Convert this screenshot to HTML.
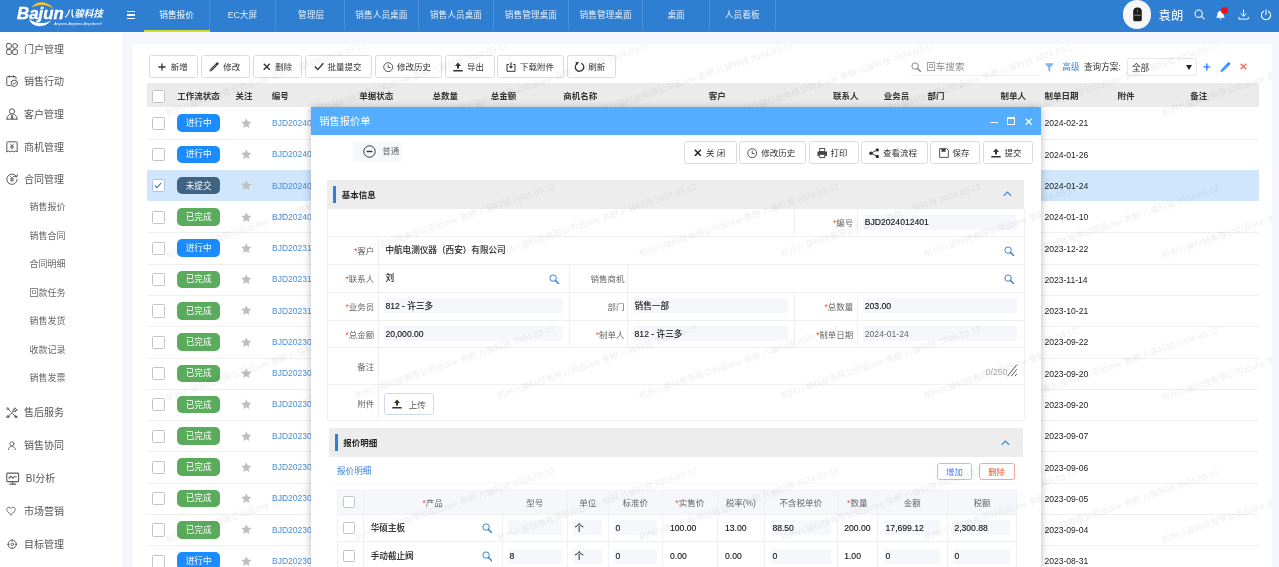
<!DOCTYPE html>
<html lang="zh-CN"><head><meta charset="utf-8"><title>销售报价</title>
<style>
html,body{margin:0;padding:0}
body{width:1279px;height:567px;overflow:hidden;position:relative;background:#f5f7fc;font-family:"Liberation Sans","Noto Sans CJK SC",sans-serif;font-size:8.5px;color:#333}
#w{position:absolute;left:0;top:0;width:1279px;height:567px;overflow:hidden;will-change:transform}
.b{position:absolute;box-sizing:border-box;display:block}
.t{position:absolute;white-space:nowrap}
.btn{position:absolute;box-sizing:border-box;border:1px solid #dcdcdc;border-radius:2.5px;background:#fff}
.ck{position:absolute;box-sizing:border-box;border:1px solid #c4c4c4;border-radius:1.5px;background:#fff}
.bd{position:absolute;box-sizing:border-box;padding-top:0.8px;border-radius:5px;color:#fff;text-align:center;font-size:8.6px;line-height:17.6px;width:42.4px;height:17.6px;white-space:nowrap}
.r{color:#f4512c}
.wm{position:absolute;white-space:nowrap;font-size:8.55px;line-height:12px;color:rgba(0,0,0,0.075);transform-origin:100% 50%;transform:rotate(-18.8deg);pointer-events:none}
</style></head><body>
<div id="w">
<div class="b" style="left:0.00px;top:0.00px;width:1279.00px;height:31.60px;background:#2e7ed2"></div>
<div class="b" style="left:0.00px;top:31.60px;width:122.00px;height:535.40px;background:#fff"></div>
<div class="b" style="left:133.00px;top:44.00px;width:1139.00px;height:523.00px;background:#fff"></div>
<svg class="b" style="left:28.00px;top:0.00px;" width="28" height="28" viewBox="0 0 28 28"><path d="M3.8 7.6 C7.4 0.6 19.6 -0.6 26.2 9.6 C20.4 4.2 11 3.6 3.8 7.6 Z" fill="#f6c22a"/><path d="M1 19 C4.4 28.4 17.4 28.2 23.4 20.2 C16.6 24.4 7.4 24 1 19 Z" fill="#fff"/></svg>
<div class="t" style="top:5.30px;font-size:16px;color:#fff;line-height:18px;left:17.00px;font-weight:bold;-webkit-text-stroke:0.35px #fff;font-style:italic;transform-origin:0 50%;transform:scaleX(1.05);">Bajun</div>
<div class="t" style="top:8.17px;font-size:9.6px;color:#fff;line-height:12px;left:64.60px;font-weight:bold;font-style:italic;">八骏科技</div>
<div class="t" style="top:20.60px;font-size:3.92px;color:#fff;line-height:6px;left:54.00px;font-style:italic;">Anyone,Anytime,Anywhere!</div>
<div class="b" style="left:127.00px;top:11.05px;width:8.40px;height:1.10px;background:#fff"></div>
<div class="b" style="left:127.00px;top:14.45px;width:8.40px;height:1.10px;background:#fff"></div>
<div class="b" style="left:127.00px;top:17.85px;width:8.40px;height:1.10px;background:#fff"></div>
<div class="t" style="top:9.30px;font-size:8.7px;color:#fff;line-height:12px;left:76.62px;width:200px;text-align:center;">销售报价</div>
<div class="b" style="left:209.10px;top:0.00px;width:0.80px;height:30.40px;background:rgba(255,255,255,0.13)"></div>
<div class="t" style="top:9.30px;font-size:8.7px;color:#e6f0fb;line-height:12px;left:142.50px;width:200px;text-align:center;">EC大屏</div>
<div class="b" style="left:275.10px;top:0.00px;width:0.80px;height:30.40px;background:rgba(255,255,255,0.13)"></div>
<div class="t" style="top:9.30px;font-size:8.7px;color:#e6f0fb;line-height:12px;left:211.07px;width:200px;text-align:center;">管理层</div>
<div class="b" style="left:343.85px;top:0.00px;width:0.80px;height:30.40px;background:rgba(255,255,255,0.13)"></div>
<div class="t" style="top:9.30px;font-size:8.7px;color:#e6f0fb;line-height:12px;left:281.38px;width:200px;text-align:center;">销售人员桌面</div>
<div class="b" style="left:418.10px;top:0.00px;width:0.80px;height:30.40px;background:rgba(255,255,255,0.13)"></div>
<div class="t" style="top:9.30px;font-size:8.7px;color:#e6f0fb;line-height:12px;left:355.95px;width:200px;text-align:center;">销售人员桌面</div>
<div class="b" style="left:493.00px;top:0.00px;width:0.80px;height:30.40px;background:rgba(255,255,255,0.13)"></div>
<div class="t" style="top:9.30px;font-size:8.7px;color:#e6f0fb;line-height:12px;left:430.90px;width:200px;text-align:center;">销售管理桌面</div>
<div class="b" style="left:568.00px;top:0.00px;width:0.80px;height:30.40px;background:rgba(255,255,255,0.13)"></div>
<div class="t" style="top:9.30px;font-size:8.7px;color:#e6f0fb;line-height:12px;left:505.60px;width:200px;text-align:center;">销售管理桌面</div>
<div class="b" style="left:642.40px;top:0.00px;width:0.80px;height:30.40px;background:rgba(255,255,255,0.13)"></div>
<div class="t" style="top:9.30px;font-size:8.7px;color:#e6f0fb;line-height:12px;left:576.10px;width:200px;text-align:center;">桌面</div>
<div class="b" style="left:709.00px;top:0.00px;width:0.80px;height:30.40px;background:rgba(255,255,255,0.13)"></div>
<div class="t" style="top:9.30px;font-size:8.7px;color:#e6f0fb;line-height:12px;left:642.20px;width:200px;text-align:center;">人员看板</div>
<div class="b" style="left:774.60px;top:0.00px;width:0.80px;height:30.40px;background:rgba(255,255,255,0.13)"></div>
<div class="b" style="left:143.75px;top:29.90px;width:65.75px;height:1.70px;background:#d4dc2a"></div>
<div class="b" style="left:1122.80px;top:0.30px;width:28.40px;height:28.40px;background:#f7f7f7;border-radius:50%"></div>
<svg class="b" style="left:1132.00px;top:7.00px;" width="11" height="15" viewBox="0 0 11 15"><path d="M1.2 5.2 C1.2 1.6 3 0.6 5.5 0.6 C8 0.6 9.8 1.6 9.8 5.2 L9.8 12.6 C9.8 13.6 9.2 14.2 8.2 14.2 L2.8 14.2 C1.8 14.2 1.2 13.6 1.2 12.6 Z" fill="#1d1d1f"/><rect x="2.2" y="7.6" width="6.6" height="1.3" fill="#777"/><rect x="4.9" y="2" width="1.2" height="4" rx="0.6" fill="#555"/></svg>
<div class="t" style="top:8.28px;font-size:12.3px;color:#fff;line-height:16px;left:1158.60px;">袁朗</div>
<svg class="b" style="left:1193.50px;top:9.30px;" width="11.4" height="10.45" viewBox="0 0 12 11"><circle cx="4.9" cy="4.9" r="3.9" fill="none" stroke="#fff" stroke-width="1.1"/><path d="M7.8 7.8 L10.8 10.4" stroke="#fff" stroke-width="1.2" stroke-linecap="round"/></svg>
<svg class="b" style="left:1215.00px;top:9.50px;" width="12" height="11" viewBox="0 0 12 11"><path d="M5.5 1 C3.3 1 2.4 2.8 2.4 4.6 C2.4 6.4 1.8 7 0.9 7.8 L10.1 7.8 C9.2 7 8.6 6.4 8.6 4.6 C8.6 2.8 7.7 1 5.5 1 Z" fill="#fff"/><path d="M4.3 8.5 a1.25 1.25 0 0 0 2.4 0 Z" fill="#fff"/></svg>
<div class="b" style="left:1220.80px;top:6.80px;width:7.10px;height:7.10px;background:#f40d14;border-radius:50%"></div>
<svg class="b" style="left:1237.60px;top:8.70px;" width="11.2" height="11.6" viewBox="0 0 12 12"><path d="M6 0.8 V7.4 M3.1 4.8 L6 7.6 L8.9 4.8 M1 8.6 V10.6 H11 V8.6" fill="none" stroke="#fff" stroke-width="1.05" stroke-linecap="round" stroke-linejoin="round"/></svg>
<svg class="b" style="left:1260.40px;top:8.80px;" width="12" height="12" viewBox="0 0 12 12"><path d="M3.6 2.3 A4.6 4.6 0 1 0 8.4 2.3" fill="none" stroke="#fff" stroke-width="1.05" stroke-linecap="round"/><path d="M6 0.8 V5.6" stroke="#fff" stroke-width="1.05" stroke-linecap="round"/></svg>
<svg class="b" style="left:6.30px;top:43.00px;" width="12" height="12" viewBox="0 0 12 12"><g fill="none" stroke="#5a5a5a" stroke-width="1" stroke-linecap="round" stroke-linejoin="round"><rect x="0.6" y="0.6" width="4.7" height="4.7" rx="0.9"/><rect x="0.6" y="6.7" width="4.7" height="4.7" rx="0.9"/><rect x="6.7" y="6.7" width="4.7" height="4.7" rx="0.9"/><circle cx="9.05" cy="2.95" r="2.4"/></g></svg>
<div class="t" style="top:42.80px;font-size:10px;color:#555;line-height:14px;left:24.00px;">门户管理</div>
<svg class="b" style="left:6.30px;top:75.20px;" width="12" height="12" viewBox="0 0 12 12"><g fill="none" stroke="#5a5a5a" stroke-width="1" stroke-linecap="round" stroke-linejoin="round"><path d="M4.4 10.6 H1.8 Q0.8 10.6 0.8 9.6 V2.6 Q0.8 1.6 1.8 1.6 H9 Q10 1.6 10 2.6 V4"/><path d="M3.2 0.7 V2.4 M7.6 0.7 V2.4" /><circle cx="8.3" cy="8.3" r="3.2"/><path d="M6.9 8.3 L8 9.4 L9.8 7.4"/></g></svg>
<div class="t" style="top:75.00px;font-size:10px;color:#555;line-height:14px;left:24.00px;">销售行动</div>
<svg class="b" style="left:6.30px;top:108.00px;" width="12" height="12" viewBox="0 0 12 12"><g fill="none" stroke="#5a5a5a" stroke-width="1" stroke-linecap="round" stroke-linejoin="round"><circle cx="6" cy="3.4" r="2.6"/><path d="M0.9 11.2 C0.9 8 3.2 6.4 4.4 6.2 M11.1 11.2 C11.1 8 8.8 6.4 7.6 6.2 M0.9 11.2 H11.1 M6 7.2 L5.2 10.8 H6.8 Z"/></g></svg>
<div class="t" style="top:107.80px;font-size:10px;color:#555;line-height:14px;left:24.00px;">客户管理</div>
<svg class="b" style="left:6.30px;top:140.80px;" width="12" height="12" viewBox="0 0 12 12"><g fill="none" stroke="#5a5a5a" stroke-width="1" stroke-linecap="round" stroke-linejoin="round"><path d="M0.8 10.8 V1.8 Q0.8 0.8 1.8 0.8 H10.2 Q11.2 0.8 11.2 1.8 V10.8 L9.5 10 L7.8 10.8 L6 10 L4.2 10.8 L2.5 10 Z"/><path d="M4.4 3 L6 5 L7.6 3 M6 5 V8 M4.6 5.4 H7.4 M4.6 6.8 H7.4" stroke-width="0.8"/></g></svg>
<div class="t" style="top:140.60px;font-size:10px;color:#555;line-height:14px;left:24.00px;">商机管理</div>
<svg class="b" style="left:6.30px;top:173.40px;" width="12" height="12" viewBox="0 0 12 12"><g fill="none" stroke="#5a5a5a" stroke-width="1" stroke-linecap="round" stroke-linejoin="round"><path d="M10.6 3.8 A5.2 5.2 0 1 0 11.2 6.4"/><path d="M11.3 1.6 L10.8 4 L8.5 3.4" /><path d="M4.4 3.4 L6 5.4 L7.6 3.4 M6 5.4 V8.8 M4.5 5.9 H7.5 M4.5 7.3 H7.5" stroke-width="0.8"/></g></svg>
<div class="t" style="top:173.20px;font-size:10px;color:#555;line-height:14px;left:24.00px;">合同管理</div>
<svg class="b" style="left:6.20px;top:406.70px;" width="11.6" height="11.6" viewBox="0 0 12 12"><g fill="none" stroke="#5a5a5a" stroke-width="1" stroke-linecap="round" stroke-linejoin="round"><path d="M1 11 L7.4 4.6 M7.4 4.6 C6.6 2.8 8 0.8 10.2 1.2 L8.8 2.6 L9.4 3.6 L10.6 3.4 L11.2 2.2 C11.6 4.2 9.6 5.6 7.4 4.6"/><path d="M11 11 L6.8 6.8 M4.6 4.6 L2.6 2.6 L1.4 2.6 L0.8 1.2 L1.6 0.8 L2.8 1.4 L2.8 2.6"/><circle cx="1.9" cy="10.1" r="1.1"/><circle cx="10.1" cy="10.1" r="1.1"/></g></svg>
<div class="t" style="top:406.30px;font-size:10px;color:#555;line-height:14px;left:24.00px;">售后服务</div>
<svg class="b" style="left:6.90px;top:440.60px;" width="9.8" height="9.8" viewBox="0 0 12 12"><g fill="none" stroke="#5a5a5a" stroke-width="1" stroke-linecap="round" stroke-linejoin="round"><circle cx="6" cy="3.4" r="2.5"/><path d="M1.6 11 C1.6 8 3.4 6.8 6 6.8 C8.6 6.8 10.4 8 10.4 11 Z"/></g></svg>
<div class="t" style="top:439.30px;font-size:10px;color:#555;line-height:14px;left:24.00px;">销售协同</div>
<svg class="b" style="left:6.20px;top:471.70px;" width="13.4" height="13.4" viewBox="0 0 12 12"><g fill="none" stroke="#5a5a5a" stroke-width="1" stroke-linecap="round" stroke-linejoin="round"><rect x="0.7" y="1" width="10.6" height="7.6" rx="0.8"/><path d="M6 8.6 V10.8 M3.4 10.9 H8.6 M2.6 5.6 L4.4 3.8 L6 5.6 L7.4 4.2 L9.2 4.2"/></g></svg>
<div class="t" style="top:472.20px;font-size:10px;color:#555;line-height:14px;left:25.80px;">BI分析</div>
<svg class="b" style="left:6.40px;top:506.00px;" width="10" height="10" viewBox="0 0 12 12"><g fill="none" stroke="#5a5a5a" stroke-width="1" stroke-linecap="round" stroke-linejoin="round"><path d="M6 10.4 C2.6 7.8 0.9 6 0.9 4 C0.9 2.4 2.1 1.4 3.4 1.4 C4.6 1.4 5.5 2.1 6 3 C6.5 2.1 7.4 1.4 8.6 1.4 C9.9 1.4 11.1 2.4 11.1 4 C11.1 6 9.4 7.8 6 10.4 Z"/></g></svg>
<div class="t" style="top:504.80px;font-size:10px;color:#555;line-height:14px;left:24.00px;">市场营销</div>
<svg class="b" style="left:6.50px;top:538.70px;" width="10.6" height="10.6" viewBox="0 0 12 12"><g fill="none" stroke="#5a5a5a" stroke-width="1" stroke-linecap="round" stroke-linejoin="round"><circle cx="6" cy="6" r="4.6"/><circle cx="6" cy="6" r="1.5"/><path d="M6 0.4 V2.4 M6 9.6 V11.6 M0.4 6 H2.4 M9.6 6 H11.6"/></g></svg>
<div class="t" style="top:537.80px;font-size:10px;color:#555;line-height:14px;left:24.00px;">目标管理</div>
<div class="t" style="top:201.42px;font-size:9px;color:#666;line-height:12px;left:29.60px;">销售报价</div>
<div class="t" style="top:229.92px;font-size:9px;color:#666;line-height:12px;left:29.60px;">销售合同</div>
<div class="t" style="top:258.32px;font-size:9px;color:#666;line-height:12px;left:29.60px;">合同明细</div>
<div class="t" style="top:286.72px;font-size:9px;color:#666;line-height:12px;left:29.60px;">回款任务</div>
<div class="t" style="top:315.22px;font-size:9px;color:#666;line-height:12px;left:29.60px;">销售发货</div>
<div class="t" style="top:343.72px;font-size:9px;color:#666;line-height:12px;left:29.60px;">收款记录</div>
<div class="t" style="top:372.22px;font-size:9px;color:#666;line-height:12px;left:29.60px;">销售发票</div>
<div class="btn" style="left:148.80px;top:55.30px;width:49.20px;height:22.40px;"></div>
<svg class="b" style="left:158.00px;top:62.50px;" width="8" height="8" viewBox="0 0 8 8"><path d="M4 0.4 V7.6 M0.4 4 H7.6" stroke="#333" stroke-width="1.3" fill="none"/></svg>
<div class="t" style="top:61.18px;font-size:8.5px;color:#333;line-height:12px;left:170.75px;">新增</div>
<div class="btn" style="left:201.00px;top:55.30px;width:49.20px;height:22.40px;"></div>
<svg class="b" style="left:209.20px;top:61.50px;" width="10" height="10" viewBox="0 0 10 10"><path d="M1.9 8.1 L6.9 3.1" stroke="#333" stroke-width="2.5" fill="none"/><path d="M2.2 7.8 L6.8 3.2" stroke="#fff" stroke-width="0.7" stroke-dasharray="0.9 0.5" fill="none"/><path d="M0.5 9.5 L0.9 7.4 L2.6 9.1 Z" fill="#333"/><path d="M7.6 2.4 L8.3 1.7" stroke="#333" stroke-width="2.6" stroke-linecap="round" fill="none"/></svg>
<div class="t" style="top:61.18px;font-size:8.5px;color:#333;line-height:12px;left:223.25px;">修改</div>
<div class="btn" style="left:253.20px;top:55.30px;width:49.30px;height:22.40px;"></div>
<svg class="b" style="left:262.50px;top:62.70px;" width="7.6" height="7.6" viewBox="0 0 8 8"><path d="M0.8 0.8 L7.2 7.2 M7.2 0.8 L0.8 7.2" stroke="#333" stroke-width="1.5" fill="none"/></svg>
<div class="t" style="top:61.18px;font-size:8.5px;color:#333;line-height:12px;left:275.00px;">删除</div>
<div class="btn" style="left:305.20px;top:55.30px;width:66.80px;height:22.40px;"></div>
<svg class="b" style="left:313.75px;top:62.00px;" width="10" height="9" viewBox="0 0 10 9"><path d="M0.8 4.6 L3.8 7.6 L9.3 1.3" stroke="#333" stroke-width="1.4" fill="none"/></svg>
<div class="t" style="top:61.18px;font-size:8.5px;color:#333;line-height:12px;left:327.50px;">批量提交</div>
<div class="btn" style="left:375.00px;top:55.30px;width:66.70px;height:22.40px;"></div>
<svg class="b" style="left:383.30px;top:61.90px;" width="10.4" height="10.4" viewBox="0 0 10.4 10.4"><circle cx="5.2" cy="5.2" r="4.5" stroke="#444" stroke-width="0.9" fill="none"/><path d="M5.2 2.6 V5.5 H7.6" stroke="#444" stroke-width="0.9" fill="none"/></svg>
<div class="t" style="top:61.18px;font-size:8.5px;color:#333;line-height:12px;left:397.00px;">修改历史</div>
<div class="btn" style="left:444.50px;top:55.30px;width:50.00px;height:22.40px;"></div>
<svg class="b" style="left:453.00px;top:61.50px;" width="10" height="10" viewBox="0 0 10 10"><path d="M5 0.6 L8 3.9 H6 V6.6 H4 V3.9 H2 Z" fill="#333"/><rect x="0.3" y="8" width="9.4" height="1.5" fill="#333"/></svg>
<div class="t" style="top:61.18px;font-size:8.5px;color:#333;line-height:12px;left:467.00px;">导出</div>
<div class="btn" style="left:497.00px;top:55.30px;width:66.50px;height:22.40px;"></div>
<svg class="b" style="left:505.50px;top:61.50px;" width="10" height="10" viewBox="0 0 10 10"><path d="M3 2.4 H1 V9.3 H9 V2.4 H7" stroke="#333" stroke-width="1" fill="none"/><path d="M5 0.3 V5.2" stroke="#333" stroke-width="1.1" fill="none"/><path d="M2.9 4.2 H7.1 L5 6.8 Z" fill="#333"/></svg>
<div class="t" style="top:61.18px;font-size:8.5px;color:#333;line-height:12px;left:520.00px;">下载附件</div>
<div class="btn" style="left:566.70px;top:55.30px;width:49.50px;height:22.40px;"></div>
<svg class="b" style="left:574.30px;top:61.00px;" width="11" height="11" viewBox="0 0 11 11"><path d="M3.3 2.5 A4.2 4.2 0 1 0 7.2 2.2" stroke="#333" stroke-width="1.25" fill="none"/><path d="M1.4 0.9 L5.2 1.3 L2.6 4.3 Z" fill="#333"/></svg>
<div class="t" style="top:61.18px;font-size:8.5px;color:#333;line-height:12px;left:588.25px;">刷新</div>
<svg class="b" style="left:910.50px;top:62.00px;" width="10.4" height="10.4" viewBox="0 0 10.4 10.4"><circle cx="4.1" cy="4.1" r="3.2" stroke="#8a8a8a" stroke-width="1" fill="none"/><path d="M6.4 6.4 L9.7 9.7" stroke="#8a8a8a" stroke-width="1.5" stroke-linecap="round"/></svg>
<div class="t" style="top:59.67px;font-size:9.6px;color:#8c8c8c;line-height:13px;left:926.20px;">回车搜索</div>
<div class="b" style="left:910.00px;top:75.00px;width:129.00px;height:0.70px;background:#f1f1f1"></div>
<svg class="b" style="left:1045.40px;top:62.80px;" width="8.6" height="9.2" viewBox="0 0 8.6 9.2"><path d="M0.2 0.2 H8.4 V1 L5.2 4.6 V9 L3.4 7.6 V4.6 L0.2 1 Z" fill="#7db2ec"/></svg>
<div class="t" style="top:61.29px;font-size:8.6px;color:#3b86d8;line-height:12px;left:1062.30px;">高级</div>
<div class="t" style="top:61.29px;font-size:8.6px;color:#333;line-height:12px;left:1084.00px;">查询方案:</div>
<div class="b" style="left:1126.70px;top:58.00px;width:70.70px;height:18.40px;border:1px solid #e8e8e8;border-radius:2.5px;background:#fff"></div>
<div class="t" style="top:62.29px;font-size:8.6px;color:#333;line-height:12px;left:1132.00px;">全部</div>
<svg class="b" style="left:1185.60px;top:65.20px;" width="6" height="5" viewBox="0 0 6 5"><path d="M0 0 H6 L3 5 Z" fill="#222"/></svg>
<svg class="b" style="left:1203.00px;top:63.40px;" width="7.8" height="7.8" viewBox="0 0 8 8"><path d="M4 0.4 V7.6 M0.4 4 H7.6" stroke="#1a85ff" stroke-width="1.4" fill="none"/></svg>
<svg class="b" style="left:1219.80px;top:61.70px;" width="10.6" height="10.6" viewBox="0 0 10 10"><path d="M1.9 8.1 L6.9 3.1" stroke="#1a85ff" stroke-width="2.5" fill="none"/><path d="M2.2 7.8 L6.8 3.2" stroke="#fff" stroke-width="0.7" stroke-dasharray="0.9 0.5" fill="none"/><path d="M0.5 9.5 L0.9 7.4 L2.6 9.1 Z" fill="#1a85ff"/><path d="M7.6 2.4 L8.3 1.7" stroke="#1a85ff" stroke-width="2.6" stroke-linecap="round" fill="none"/></svg>
<svg class="b" style="left:1239.60px;top:63.40px;" width="7" height="7" viewBox="0 0 8 8"><path d="M0.8 0.8 L7.2 7.2 M7.2 0.8 L0.8 7.2" stroke="#ff6550" stroke-width="1.5" fill="none"/></svg>
<div class="b" style="left:147.00px;top:83.20px;width:1111.70px;height:24.10px;background:#ebebeb"></div>
<div class="ck" style="left:151.9px;top:90.2px;width:12.8px;height:13.1px"></div>
<div class="t" style="top:89.98px;font-size:8.5px;color:#333;line-height:12px;left:177.20px;font-weight:bold;">工作流状态</div>
<div class="t" style="top:89.98px;font-size:8.5px;color:#333;line-height:12px;left:235.50px;font-weight:bold;">关注</div>
<div class="t" style="top:89.98px;font-size:8.5px;color:#333;line-height:12px;left:271.70px;font-weight:bold;">编号</div>
<div class="t" style="top:89.98px;font-size:8.5px;color:#333;line-height:12px;left:359.20px;font-weight:bold;">单据状态</div>
<div class="t" style="top:89.98px;font-size:8.5px;color:#333;line-height:12px;left:432.50px;font-weight:bold;">总数量</div>
<div class="t" style="top:89.98px;font-size:8.5px;color:#333;line-height:12px;left:490.70px;font-weight:bold;">总金额</div>
<div class="t" style="top:89.98px;font-size:8.5px;color:#333;line-height:12px;left:563.20px;font-weight:bold;">商机名称</div>
<div class="t" style="top:89.98px;font-size:8.5px;color:#333;line-height:12px;left:708.70px;font-weight:bold;">客户</div>
<div class="t" style="top:89.98px;font-size:8.5px;color:#333;line-height:12px;left:833.00px;font-weight:bold;">联系人</div>
<div class="t" style="top:89.98px;font-size:8.5px;color:#333;line-height:12px;left:883.70px;font-weight:bold;">业务员</div>
<div class="t" style="top:89.98px;font-size:8.5px;color:#333;line-height:12px;left:927.50px;font-weight:bold;">部门</div>
<div class="t" style="top:89.98px;font-size:8.5px;color:#333;line-height:12px;left:1000.50px;font-weight:bold;">制单人</div>
<div class="t" style="top:89.98px;font-size:8.5px;color:#333;line-height:12px;left:1044.60px;font-weight:bold;">制单日期</div>
<div class="t" style="top:89.98px;font-size:8.5px;color:#333;line-height:12px;left:1117.60px;font-weight:bold;">附件</div>
<div class="t" style="top:89.98px;font-size:8.5px;color:#333;line-height:12px;left:1190.20px;font-weight:bold;">备注</div>
<div class="b" style="left:147.00px;top:138.65px;width:1111.70px;height:0.80px;background:#efefef"></div>
<div class="ck" style="left:151.9px;top:116.70px;width:12.8px;height:13.2px;"></div>
<div class="bd" style="left:177.4px;top:114.30px;background:#1a8cff">进行中</div>
<svg class="b" style="left:241.10px;top:117.80px;" width="10.6" height="10.6" viewBox="0 0 10 10"><path d="M5 0.3 L6.45 3.4 L9.8 3.8 L7.3 6.1 L7.95 9.5 L5 7.8 L2.05 9.5 L2.7 6.1 L0.2 3.8 L3.55 3.4 Z" fill="#bfbfbf"/></svg>
<div class="t" style="top:116.94px;font-size:8.5px;color:#4a8fdc;line-height:12px;left:272.00px;">BJD2024022101</div>
<div class="t" style="top:117.45px;font-size:8.58px;color:#222;line-height:12px;left:1044.40px;">2024-02-21</div>
<div class="b" style="left:147.00px;top:169.93px;width:1111.70px;height:0.80px;background:#efefef"></div>
<div class="ck" style="left:151.9px;top:147.98px;width:12.8px;height:13.2px;"></div>
<div class="bd" style="left:177.4px;top:145.58px;background:#1a8cff">进行中</div>
<svg class="b" style="left:241.10px;top:149.08px;" width="10.6" height="10.6" viewBox="0 0 10 10"><path d="M5 0.3 L6.45 3.4 L9.8 3.8 L7.3 6.1 L7.95 9.5 L5 7.8 L2.05 9.5 L2.7 6.1 L0.2 3.8 L3.55 3.4 Z" fill="#bfbfbf"/></svg>
<div class="t" style="top:148.22px;font-size:8.5px;color:#4a8fdc;line-height:12px;left:272.00px;">BJD2024012601</div>
<div class="t" style="top:148.73px;font-size:8.58px;color:#222;line-height:12px;left:1044.40px;">2024-01-26</div>
<div class="b" style="left:147.00px;top:170.16px;width:1111.70px;height:31.30px;background:#cfe6fd"></div>
<div class="ck" style="left:151.9px;top:179.26px;width:12.8px;height:13.2px;border-color:#b4c2d4;"></div>
<svg class="b" style="left:154.20px;top:182.36px;" width="8" height="7" viewBox="0 0 8 7"><path d="M0.9 3.6 L3 5.7 L7.2 1" stroke="#1f7ae0" stroke-width="1.1" fill="none"/></svg>
<div class="bd" style="left:177.4px;top:176.86px;background:#3f6483">未提交</div>
<svg class="b" style="left:241.10px;top:180.36px;" width="10.6" height="10.6" viewBox="0 0 10 10"><path d="M5 0.3 L6.45 3.4 L9.8 3.8 L7.3 6.1 L7.95 9.5 L5 7.8 L2.05 9.5 L2.7 6.1 L0.2 3.8 L3.55 3.4 Z" fill="#bfbfbf"/></svg>
<div class="t" style="top:179.50px;font-size:8.5px;color:#4a8fdc;line-height:12px;left:272.00px;">BJD2024012401</div>
<div class="t" style="top:180.01px;font-size:8.58px;color:#222;line-height:12px;left:1044.40px;">2024-01-24</div>
<div class="b" style="left:147.00px;top:232.49px;width:1111.70px;height:0.80px;background:#efefef"></div>
<div class="ck" style="left:151.9px;top:210.54px;width:12.8px;height:13.2px;"></div>
<div class="bd" style="left:177.4px;top:208.14px;background:#5aab5c">已完成</div>
<svg class="b" style="left:241.10px;top:211.64px;" width="10.6" height="10.6" viewBox="0 0 10 10"><path d="M5 0.3 L6.45 3.4 L9.8 3.8 L7.3 6.1 L7.95 9.5 L5 7.8 L2.05 9.5 L2.7 6.1 L0.2 3.8 L3.55 3.4 Z" fill="#bfbfbf"/></svg>
<div class="t" style="top:210.78px;font-size:8.5px;color:#4a8fdc;line-height:12px;left:272.00px;">BJD2024011001</div>
<div class="t" style="top:211.29px;font-size:8.58px;color:#222;line-height:12px;left:1044.40px;">2024-01-10</div>
<div class="b" style="left:147.00px;top:263.77px;width:1111.70px;height:0.80px;background:#efefef"></div>
<div class="ck" style="left:151.9px;top:241.82px;width:12.8px;height:13.2px;"></div>
<div class="bd" style="left:177.4px;top:239.42px;background:#1a8cff">进行中</div>
<svg class="b" style="left:241.10px;top:242.92px;" width="10.6" height="10.6" viewBox="0 0 10 10"><path d="M5 0.3 L6.45 3.4 L9.8 3.8 L7.3 6.1 L7.95 9.5 L5 7.8 L2.05 9.5 L2.7 6.1 L0.2 3.8 L3.55 3.4 Z" fill="#bfbfbf"/></svg>
<div class="t" style="top:242.06px;font-size:8.5px;color:#4a8fdc;line-height:12px;left:272.00px;">BJD2023122201</div>
<div class="t" style="top:242.57px;font-size:8.58px;color:#222;line-height:12px;left:1044.40px;">2023-12-22</div>
<div class="b" style="left:147.00px;top:295.05px;width:1111.70px;height:0.80px;background:#efefef"></div>
<div class="ck" style="left:151.9px;top:273.10px;width:12.8px;height:13.2px;"></div>
<div class="bd" style="left:177.4px;top:270.70px;background:#5aab5c">已完成</div>
<svg class="b" style="left:241.10px;top:274.20px;" width="10.6" height="10.6" viewBox="0 0 10 10"><path d="M5 0.3 L6.45 3.4 L9.8 3.8 L7.3 6.1 L7.95 9.5 L5 7.8 L2.05 9.5 L2.7 6.1 L0.2 3.8 L3.55 3.4 Z" fill="#bfbfbf"/></svg>
<div class="t" style="top:273.35px;font-size:8.5px;color:#4a8fdc;line-height:12px;left:272.00px;">BJD2023111401</div>
<div class="t" style="top:273.85px;font-size:8.58px;color:#222;line-height:12px;left:1044.40px;">2023-11-14</div>
<div class="b" style="left:147.00px;top:326.33px;width:1111.70px;height:0.80px;background:#efefef"></div>
<div class="ck" style="left:151.9px;top:304.38px;width:12.8px;height:13.2px;"></div>
<div class="bd" style="left:177.4px;top:301.98px;background:#5aab5c">已完成</div>
<svg class="b" style="left:241.10px;top:305.48px;" width="10.6" height="10.6" viewBox="0 0 10 10"><path d="M5 0.3 L6.45 3.4 L9.8 3.8 L7.3 6.1 L7.95 9.5 L5 7.8 L2.05 9.5 L2.7 6.1 L0.2 3.8 L3.55 3.4 Z" fill="#bfbfbf"/></svg>
<div class="t" style="top:304.62px;font-size:8.5px;color:#4a8fdc;line-height:12px;left:272.00px;">BJD2023102101</div>
<div class="t" style="top:305.13px;font-size:8.58px;color:#222;line-height:12px;left:1044.40px;">2023-10-21</div>
<div class="b" style="left:147.00px;top:357.61px;width:1111.70px;height:0.80px;background:#efefef"></div>
<div class="ck" style="left:151.9px;top:335.66px;width:12.8px;height:13.2px;"></div>
<div class="bd" style="left:177.4px;top:333.26px;background:#5aab5c">已完成</div>
<svg class="b" style="left:241.10px;top:336.76px;" width="10.6" height="10.6" viewBox="0 0 10 10"><path d="M5 0.3 L6.45 3.4 L9.8 3.8 L7.3 6.1 L7.95 9.5 L5 7.8 L2.05 9.5 L2.7 6.1 L0.2 3.8 L3.55 3.4 Z" fill="#bfbfbf"/></svg>
<div class="t" style="top:335.91px;font-size:8.5px;color:#4a8fdc;line-height:12px;left:272.00px;">BJD2023092201</div>
<div class="t" style="top:336.41px;font-size:8.58px;color:#222;line-height:12px;left:1044.40px;">2023-09-22</div>
<div class="b" style="left:147.00px;top:388.89px;width:1111.70px;height:0.80px;background:#efefef"></div>
<div class="ck" style="left:151.9px;top:366.94px;width:12.8px;height:13.2px;"></div>
<div class="bd" style="left:177.4px;top:364.54px;background:#5aab5c">已完成</div>
<svg class="b" style="left:241.10px;top:368.04px;" width="10.6" height="10.6" viewBox="0 0 10 10"><path d="M5 0.3 L6.45 3.4 L9.8 3.8 L7.3 6.1 L7.95 9.5 L5 7.8 L2.05 9.5 L2.7 6.1 L0.2 3.8 L3.55 3.4 Z" fill="#bfbfbf"/></svg>
<div class="t" style="top:367.19px;font-size:8.5px;color:#4a8fdc;line-height:12px;left:272.00px;">BJD2023092002</div>
<div class="t" style="top:367.69px;font-size:8.58px;color:#222;line-height:12px;left:1044.40px;">2023-09-20</div>
<div class="b" style="left:147.00px;top:420.17px;width:1111.70px;height:0.80px;background:#efefef"></div>
<div class="ck" style="left:151.9px;top:398.22px;width:12.8px;height:13.2px;"></div>
<div class="bd" style="left:177.4px;top:395.82px;background:#5aab5c">已完成</div>
<svg class="b" style="left:241.10px;top:399.32px;" width="10.6" height="10.6" viewBox="0 0 10 10"><path d="M5 0.3 L6.45 3.4 L9.8 3.8 L7.3 6.1 L7.95 9.5 L5 7.8 L2.05 9.5 L2.7 6.1 L0.2 3.8 L3.55 3.4 Z" fill="#bfbfbf"/></svg>
<div class="t" style="top:398.47px;font-size:8.5px;color:#4a8fdc;line-height:12px;left:272.00px;">BJD2023092001</div>
<div class="t" style="top:398.97px;font-size:8.58px;color:#222;line-height:12px;left:1044.40px;">2023-09-20</div>
<div class="b" style="left:147.00px;top:451.45px;width:1111.70px;height:0.80px;background:#efefef"></div>
<div class="ck" style="left:151.9px;top:429.50px;width:12.8px;height:13.2px;"></div>
<div class="bd" style="left:177.4px;top:427.10px;background:#5aab5c">已完成</div>
<svg class="b" style="left:241.10px;top:430.60px;" width="10.6" height="10.6" viewBox="0 0 10 10"><path d="M5 0.3 L6.45 3.4 L9.8 3.8 L7.3 6.1 L7.95 9.5 L5 7.8 L2.05 9.5 L2.7 6.1 L0.2 3.8 L3.55 3.4 Z" fill="#bfbfbf"/></svg>
<div class="t" style="top:429.75px;font-size:8.5px;color:#4a8fdc;line-height:12px;left:272.00px;">BJD2023090701</div>
<div class="t" style="top:430.25px;font-size:8.58px;color:#222;line-height:12px;left:1044.40px;">2023-09-07</div>
<div class="b" style="left:147.00px;top:482.73px;width:1111.70px;height:0.80px;background:#efefef"></div>
<div class="ck" style="left:151.9px;top:460.78px;width:12.8px;height:13.2px;"></div>
<div class="bd" style="left:177.4px;top:458.38px;background:#5aab5c">已完成</div>
<svg class="b" style="left:241.10px;top:461.88px;" width="10.6" height="10.6" viewBox="0 0 10 10"><path d="M5 0.3 L6.45 3.4 L9.8 3.8 L7.3 6.1 L7.95 9.5 L5 7.8 L2.05 9.5 L2.7 6.1 L0.2 3.8 L3.55 3.4 Z" fill="#bfbfbf"/></svg>
<div class="t" style="top:461.03px;font-size:8.5px;color:#4a8fdc;line-height:12px;left:272.00px;">BJD2023090601</div>
<div class="t" style="top:461.53px;font-size:8.58px;color:#222;line-height:12px;left:1044.40px;">2023-09-06</div>
<div class="b" style="left:147.00px;top:514.01px;width:1111.70px;height:0.80px;background:#efefef"></div>
<div class="ck" style="left:151.9px;top:492.06px;width:12.8px;height:13.2px;"></div>
<div class="bd" style="left:177.4px;top:489.66px;background:#5aab5c">已完成</div>
<svg class="b" style="left:241.10px;top:493.16px;" width="10.6" height="10.6" viewBox="0 0 10 10"><path d="M5 0.3 L6.45 3.4 L9.8 3.8 L7.3 6.1 L7.95 9.5 L5 7.8 L2.05 9.5 L2.7 6.1 L0.2 3.8 L3.55 3.4 Z" fill="#bfbfbf"/></svg>
<div class="t" style="top:492.31px;font-size:8.5px;color:#4a8fdc;line-height:12px;left:272.00px;">BJD2023090501</div>
<div class="t" style="top:492.81px;font-size:8.58px;color:#222;line-height:12px;left:1044.40px;">2023-09-05</div>
<div class="b" style="left:147.00px;top:545.29px;width:1111.70px;height:0.80px;background:#efefef"></div>
<div class="ck" style="left:151.9px;top:523.34px;width:12.8px;height:13.2px;"></div>
<div class="bd" style="left:177.4px;top:520.94px;background:#5aab5c">已完成</div>
<svg class="b" style="left:241.10px;top:524.44px;" width="10.6" height="10.6" viewBox="0 0 10 10"><path d="M5 0.3 L6.45 3.4 L9.8 3.8 L7.3 6.1 L7.95 9.5 L5 7.8 L2.05 9.5 L2.7 6.1 L0.2 3.8 L3.55 3.4 Z" fill="#bfbfbf"/></svg>
<div class="t" style="top:523.59px;font-size:8.5px;color:#4a8fdc;line-height:12px;left:272.00px;">BJD2023090401</div>
<div class="t" style="top:524.09px;font-size:8.58px;color:#222;line-height:12px;left:1044.40px;">2023-09-04</div>
<div class="b" style="left:147.00px;top:576.57px;width:1111.70px;height:0.80px;background:#efefef"></div>
<div class="ck" style="left:151.9px;top:554.62px;width:12.8px;height:13.2px;"></div>
<div class="bd" style="left:177.4px;top:552.22px;background:#1a8cff">进行中</div>
<svg class="b" style="left:241.10px;top:555.72px;" width="10.6" height="10.6" viewBox="0 0 10 10"><path d="M5 0.3 L6.45 3.4 L9.8 3.8 L7.3 6.1 L7.95 9.5 L5 7.8 L2.05 9.5 L2.7 6.1 L0.2 3.8 L3.55 3.4 Z" fill="#bfbfbf"/></svg>
<div class="t" style="top:554.87px;font-size:8.5px;color:#4a8fdc;line-height:12px;left:272.00px;">BJD2023083101</div>
<div class="t" style="top:555.37px;font-size:8.58px;color:#222;line-height:12px;left:1044.40px;">2023-08-31</div>
<div class="b" style="left:133px;top:44px;width:1139px;height:523px;overflow:hidden;pointer-events:none">
<div class="wm" style="right:907.0px;top:-4.6px;color:rgba(0,0,0,0.078)">杭州八骏科技有限公司云one 袁朗 八骏科技 2024-03-12</div>
<div class="wm" style="right:764.7px;top:-4.6px;color:rgba(0,0,0,0.078)">杭州八骏科技有限公司云one 袁朗 八骏科技 2024-03-12</div>
<div class="wm" style="right:622.4px;top:-4.6px;color:rgba(0,0,0,0.078)">杭州八骏科技有限公司云one 袁朗 八骏科技 2024-03-12</div>
<div class="wm" style="right:480.1px;top:-4.6px;color:rgba(0,0,0,0.078)">杭州八骏科技有限公司云one 袁朗 八骏科技 2024-03-12</div>
<div class="wm" style="right:337.8px;top:-4.6px;color:rgba(0,0,0,0.078)">杭州八骏科技有限公司云one 袁朗 八骏科技 2024-03-12</div>
<div class="wm" style="right:195.5px;top:-4.6px;color:rgba(0,0,0,0.078)">杭州八骏科技有限公司云one 袁朗 八骏科技 2024-03-12</div>
<div class="wm" style="right:53.2px;top:-4.6px;color:rgba(0,0,0,0.078)">杭州八骏科技有限公司云one 袁朗 八骏科技 2024-03-12</div>
<div class="wm" style="right:-89.1px;top:-4.6px;color:rgba(0,0,0,0.078)">杭州八骏科技有限公司云one 袁朗 八骏科技 2024-03-12</div>
<div class="wm" style="right:907.0px;top:137.7px;color:rgba(0,0,0,0.078)">杭州八骏科技有限公司云one 袁朗 八骏科技 2024-03-12</div>
<div class="wm" style="right:764.7px;top:137.7px;color:rgba(0,0,0,0.078)">杭州八骏科技有限公司云one 袁朗 八骏科技 2024-03-12</div>
<div class="wm" style="right:622.4px;top:137.7px;color:rgba(0,0,0,0.078)">杭州八骏科技有限公司云one 袁朗 八骏科技 2024-03-12</div>
<div class="wm" style="right:480.1px;top:137.7px;color:rgba(0,0,0,0.078)">杭州八骏科技有限公司云one 袁朗 八骏科技 2024-03-12</div>
<div class="wm" style="right:337.8px;top:137.7px;color:rgba(0,0,0,0.078)">杭州八骏科技有限公司云one 袁朗 八骏科技 2024-03-12</div>
<div class="wm" style="right:195.5px;top:137.7px;color:rgba(0,0,0,0.078)">杭州八骏科技有限公司云one 袁朗 八骏科技 2024-03-12</div>
<div class="wm" style="right:53.2px;top:137.7px;color:rgba(0,0,0,0.078)">杭州八骏科技有限公司云one 袁朗 八骏科技 2024-03-12</div>
<div class="wm" style="right:-89.1px;top:137.7px;color:rgba(0,0,0,0.078)">杭州八骏科技有限公司云one 袁朗 八骏科技 2024-03-12</div>
<div class="wm" style="right:907.0px;top:280.0px;color:rgba(0,0,0,0.078)">杭州八骏科技有限公司云one 袁朗 八骏科技 2024-03-12</div>
<div class="wm" style="right:764.7px;top:280.0px;color:rgba(0,0,0,0.078)">杭州八骏科技有限公司云one 袁朗 八骏科技 2024-03-12</div>
<div class="wm" style="right:622.4px;top:280.0px;color:rgba(0,0,0,0.078)">杭州八骏科技有限公司云one 袁朗 八骏科技 2024-03-12</div>
<div class="wm" style="right:480.1px;top:280.0px;color:rgba(0,0,0,0.078)">杭州八骏科技有限公司云one 袁朗 八骏科技 2024-03-12</div>
<div class="wm" style="right:337.8px;top:280.0px;color:rgba(0,0,0,0.078)">杭州八骏科技有限公司云one 袁朗 八骏科技 2024-03-12</div>
<div class="wm" style="right:195.5px;top:280.0px;color:rgba(0,0,0,0.078)">杭州八骏科技有限公司云one 袁朗 八骏科技 2024-03-12</div>
<div class="wm" style="right:53.2px;top:280.0px;color:rgba(0,0,0,0.078)">杭州八骏科技有限公司云one 袁朗 八骏科技 2024-03-12</div>
<div class="wm" style="right:-89.1px;top:280.0px;color:rgba(0,0,0,0.078)">杭州八骏科技有限公司云one 袁朗 八骏科技 2024-03-12</div>
<div class="wm" style="right:907.0px;top:422.3px;color:rgba(0,0,0,0.078)">杭州八骏科技有限公司云one 袁朗 八骏科技 2024-03-12</div>
<div class="wm" style="right:764.7px;top:422.3px;color:rgba(0,0,0,0.078)">杭州八骏科技有限公司云one 袁朗 八骏科技 2024-03-12</div>
<div class="wm" style="right:622.4px;top:422.3px;color:rgba(0,0,0,0.078)">杭州八骏科技有限公司云one 袁朗 八骏科技 2024-03-12</div>
<div class="wm" style="right:480.1px;top:422.3px;color:rgba(0,0,0,0.078)">杭州八骏科技有限公司云one 袁朗 八骏科技 2024-03-12</div>
<div class="wm" style="right:337.8px;top:422.3px;color:rgba(0,0,0,0.078)">杭州八骏科技有限公司云one 袁朗 八骏科技 2024-03-12</div>
<div class="wm" style="right:195.5px;top:422.3px;color:rgba(0,0,0,0.078)">杭州八骏科技有限公司云one 袁朗 八骏科技 2024-03-12</div>
<div class="wm" style="right:53.2px;top:422.3px;color:rgba(0,0,0,0.078)">杭州八骏科技有限公司云one 袁朗 八骏科技 2024-03-12</div>
<div class="wm" style="right:-89.1px;top:422.3px;color:rgba(0,0,0,0.078)">杭州八骏科技有限公司云one 袁朗 八骏科技 2024-03-12</div>
<div class="wm" style="right:907.0px;top:564.6px;color:rgba(0,0,0,0.078)">杭州八骏科技有限公司云one 袁朗 八骏科技 2024-03-12</div>
<div class="wm" style="right:764.7px;top:564.6px;color:rgba(0,0,0,0.078)">杭州八骏科技有限公司云one 袁朗 八骏科技 2024-03-12</div>
<div class="wm" style="right:622.4px;top:564.6px;color:rgba(0,0,0,0.078)">杭州八骏科技有限公司云one 袁朗 八骏科技 2024-03-12</div>
<div class="wm" style="right:480.1px;top:564.6px;color:rgba(0,0,0,0.078)">杭州八骏科技有限公司云one 袁朗 八骏科技 2024-03-12</div>
<div class="wm" style="right:337.8px;top:564.6px;color:rgba(0,0,0,0.078)">杭州八骏科技有限公司云one 袁朗 八骏科技 2024-03-12</div>
<div class="wm" style="right:195.5px;top:564.6px;color:rgba(0,0,0,0.078)">杭州八骏科技有限公司云one 袁朗 八骏科技 2024-03-12</div>
<div class="wm" style="right:53.2px;top:564.6px;color:rgba(0,0,0,0.078)">杭州八骏科技有限公司云one 袁朗 八骏科技 2024-03-12</div>
<div class="wm" style="right:-89.1px;top:564.6px;color:rgba(0,0,0,0.078)">杭州八骏科技有限公司云one 袁朗 八骏科技 2024-03-12</div>
</div>
<div class="b" style="left:310.70px;top:107.00px;width:730.10px;height:463.00px;background:#fff;box-shadow:0 1px 8px rgba(0,0,0,0.27)"></div>
<div class="b" style="left:310.70px;top:107.00px;width:730.10px;height:28.00px;background:#54adff"></div>
<div class="t" style="top:114.82px;font-size:10.3px;color:#fff;line-height:14px;left:319.20px;">销售报价单</div>
<div class="b" style="left:990.00px;top:121.60px;width:7.60px;height:1.30px;background:#fff"></div>
<div class="b" style="left:1007.00px;top:117.40px;width:8.00px;height:7.20px;border:1.1px solid #fff;border-top-width:2.2px"></div>
<svg class="b" style="left:1024.60px;top:117.60px;" width="7.4" height="7.4" viewBox="0 0 8 8"><path d="M0.8 0.8 L7.2 7.2 M7.2 0.8 L0.8 7.2" stroke="#fff" stroke-width="1.4" fill="none"/></svg>
<div class="b" style="left:353.00px;top:141.70px;width:48.80px;height:20.10px;background:#f6f8fc"></div>
<svg class="b" style="left:362.60px;top:144.60px;" width="13" height="13" viewBox="0 0 13 13"><circle cx="6.5" cy="6.5" r="5.7" fill="none" stroke="#333" stroke-width="1"/><path d="M3.6 6.5 H9.4" stroke="#333" stroke-width="1.4"/></svg>
<div class="t" style="top:144.98px;font-size:8.5px;color:#666;line-height:12px;left:382.20px;">普通</div>
<div class="btn" style="left:684.00px;top:141.20px;width:52.60px;height:22.40px;"></div>
<svg class="b" style="left:693.60px;top:148.70px;" width="7.8" height="7.8" viewBox="0 0 8 8"><path d="M0.8 0.8 L7.2 7.2 M7.2 0.8 L0.8 7.2" stroke="#222" stroke-width="1.55" fill="none"/></svg>
<div class="t" style="top:147.08px;font-size:8.5px;color:#333;line-height:12px;left:706.00px;">关 闭</div>
<div class="btn" style="left:739.00px;top:141.20px;width:67.30px;height:22.40px;"></div>
<svg class="b" style="left:747.30px;top:148.10px;" width="10.4" height="10.4" viewBox="0 0 10.4 10.4"><circle cx="5.2" cy="5.2" r="4.5" stroke="#444" stroke-width="0.9" fill="none"/><path d="M5.2 2.6 V5.5 H7.6" stroke="#444" stroke-width="0.9" fill="none"/></svg>
<div class="t" style="top:147.08px;font-size:8.5px;color:#333;line-height:12px;left:761.20px;">修改历史</div>
<div class="btn" style="left:808.70px;top:141.20px;width:49.90px;height:22.40px;"></div>
<svg class="b" style="left:816.60px;top:148.20px;" width="10.4" height="10" viewBox="0 0 10.4 10"><rect x="2.7" y="0.5" width="5" height="3" fill="none" stroke="#444" stroke-width="0.9"/><path d="M0.4 3.6 H10 V8 H8.2 V6 H2.2 V8 H0.4 Z" fill="#444"/><rect x="2.7" y="6.4" width="5" height="3.1" fill="none" stroke="#444" stroke-width="0.9"/></svg>
<div class="t" style="top:147.08px;font-size:8.5px;color:#333;line-height:12px;left:830.50px;">打印</div>
<div class="btn" style="left:861.20px;top:141.20px;width:67.00px;height:22.40px;"></div>
<svg class="b" style="left:869.10px;top:148.00px;" width="10.4" height="10.4" viewBox="0 0 10.4 10.4"><circle cx="8.3" cy="1.9" r="1.7" fill="#333"/><circle cx="8.3" cy="8.5" r="1.7" fill="#333"/><circle cx="2" cy="5.2" r="1.8" fill="#333"/><path d="M8.3 1.9 L2 5.2 L8.3 8.5" stroke="#333" stroke-width="0.9" fill="none"/></svg>
<div class="t" style="top:147.08px;font-size:8.5px;color:#333;line-height:12px;left:883.00px;">查看流程</div>
<div class="btn" style="left:930.20px;top:141.20px;width:50.00px;height:22.40px;"></div>
<svg class="b" style="left:938.60px;top:148.30px;" width="10" height="10" viewBox="0 0 10 10"><path d="M0.6 0.6 H7.6 L9.4 2.4 V9.4 H0.6 Z" fill="none" stroke="#444" stroke-width="0.9"/><rect x="2.4" y="0.8" width="4.2" height="3" fill="#444"/></svg>
<div class="t" style="top:147.08px;font-size:8.5px;color:#333;line-height:12px;left:952.50px;">保存</div>
<div class="btn" style="left:982.70px;top:141.20px;width:50.30px;height:22.40px;"></div>
<svg class="b" style="left:990.80px;top:148.30px;" width="10" height="10" viewBox="0 0 10 10"><path d="M5 0.6 L8 3.9 H6 V6.6 H4 V3.9 H2 Z" fill="#333"/><rect x="0.3" y="8" width="9.4" height="1.5" fill="#333"/></svg>
<div class="t" style="top:147.08px;font-size:8.5px;color:#333;line-height:12px;left:1004.50px;">提交</div>
<div class="b" style="left:327.00px;top:179.50px;width:697.00px;height:29.20px;background:#ededed"></div>
<div class="b" style="left:333.20px;top:185.60px;width:2.80px;height:17.00px;background:#2f7fd6"></div>
<div class="t" style="top:189.08px;font-size:8.5px;color:#222;line-height:12px;left:341.70px;font-weight:bold;">基本信息</div>
<svg class="b" style="left:1003.20px;top:191.20px;" width="8.8" height="5.6" viewBox="0 0 8.8 5.6"><path d="M0.7 4.8 L4.4 1 L8.1 4.8" stroke="#3b86d8" stroke-width="1.2" fill="none"/></svg>
<div class="b" style="left:327.00px;top:235.95px;width:697.00px;height:0.70px;background:#f0f0f0"></div>
<div class="b" style="left:327.00px;top:263.95px;width:697.00px;height:0.70px;background:#f0f0f0"></div>
<div class="b" style="left:327.00px;top:291.95px;width:697.00px;height:0.70px;background:#f0f0f0"></div>
<div class="b" style="left:327.00px;top:319.65px;width:697.00px;height:0.70px;background:#f0f0f0"></div>
<div class="b" style="left:327.00px;top:347.15px;width:697.00px;height:0.70px;background:#f0f0f0"></div>
<div class="b" style="left:327.00px;top:383.85px;width:697.00px;height:0.70px;background:#f0f0f0"></div>
<div class="b" style="left:327.00px;top:419.95px;width:697.00px;height:0.70px;background:#f0f0f0"></div>
<div class="b" style="left:326.65px;top:208.70px;width:0.70px;height:211.60px;background:#f0f0f0"></div>
<div class="b" style="left:1023.65px;top:208.70px;width:0.70px;height:211.60px;background:#f0f0f0"></div>
<div class="b" style="left:377.85px;top:236.30px;width:0.70px;height:184.00px;background:#f0f0f0"></div>
<div class="b" style="left:568.85px;top:264.30px;width:0.70px;height:83.20px;background:#f0f0f0"></div>
<div class="b" style="left:627.05px;top:264.30px;width:0.70px;height:83.20px;background:#f0f0f0"></div>
<div class="b" style="left:793.95px;top:208.70px;width:0.70px;height:27.60px;background:#f0f0f0"></div>
<div class="b" style="left:856.85px;top:208.70px;width:0.70px;height:27.60px;background:#f0f0f0"></div>
<div class="b" style="left:793.95px;top:292.30px;width:0.70px;height:55.20px;background:#f0f0f0"></div>
<div class="b" style="left:856.85px;top:292.30px;width:0.70px;height:55.20px;background:#f0f0f0"></div>
<div class="t" style="top:217.28px;font-size:8.5px;color:#666;line-height:12px;right:425.70px;"><span class="r">*</span>编号</div>
<div class="b" style="left:863.20px;top:214.50px;width:154.30px;height:15.10px;background:#f5f7fc;border-radius:2px"></div>
<div class="t" style="top:216.30px;font-size:8.6px;color:#111;line-height:12px;left:864.80px;-webkit-text-stroke:0.12px #111;">BJD2024012401</div>
<div class="t" style="top:245.08px;font-size:8.5px;color:#666;line-height:12px;right:904.70px;"><span class="r">*</span>客户</div>
<div class="t" style="top:244.30px;font-size:8.6px;color:#111;line-height:12px;left:385.40px;-webkit-text-stroke:0.12px #111;">中航电测仪器（西安）有限公司</div>
<svg class="b" style="left:1004.20px;top:245.60px;" width="10.4" height="10.4" viewBox="0 0 10.4 10.4"><circle cx="4.1" cy="4.1" r="3.2" stroke="#3b86d8" stroke-width="1" fill="none"/><path d="M6.4 6.4 L9.7 9.7" stroke="#3b86d8" stroke-width="1.5" stroke-linecap="round"/></svg>
<div class="t" style="top:273.08px;font-size:8.5px;color:#666;line-height:12px;right:904.70px;"><span class="r">*</span>联系人</div>
<div class="t" style="top:272.30px;font-size:8.6px;color:#111;line-height:12px;left:385.40px;-webkit-text-stroke:0.12px #111;">刘</div>
<svg class="b" style="left:549.40px;top:273.60px;" width="10.4" height="10.4" viewBox="0 0 10.4 10.4"><circle cx="4.1" cy="4.1" r="3.2" stroke="#3b86d8" stroke-width="1" fill="none"/><path d="M6.4 6.4 L9.7 9.7" stroke="#3b86d8" stroke-width="1.5" stroke-linecap="round"/></svg>
<div class="t" style="top:273.08px;font-size:8.5px;color:#666;line-height:12px;right:654.50px;">销售商机</div>
<svg class="b" style="left:1004.20px;top:273.60px;" width="10.4" height="10.4" viewBox="0 0 10.4 10.4"><circle cx="4.1" cy="4.1" r="3.2" stroke="#3b86d8" stroke-width="1" fill="none"/><path d="M6.4 6.4 L9.7 9.7" stroke="#3b86d8" stroke-width="1.5" stroke-linecap="round"/></svg>
<div class="t" style="top:300.98px;font-size:8.5px;color:#666;line-height:12px;right:904.70px;"><span class="r">*</span>业务员</div>
<div class="b" style="left:383.80px;top:298.20px;width:178.80px;height:15.10px;background:#f5f7fc;border-radius:2px"></div>
<div class="t" style="top:300.00px;font-size:8.6px;color:#111;line-height:12px;left:385.40px;-webkit-text-stroke:0.12px #111;">812 - 许三多</div>
<div class="t" style="top:300.98px;font-size:8.5px;color:#666;line-height:12px;right:654.50px;">部门</div>
<div class="b" style="left:633.00px;top:298.20px;width:155.30px;height:15.10px;background:#f5f7fc;border-radius:2px"></div>
<div class="t" style="top:300.00px;font-size:8.6px;color:#111;line-height:12px;left:634.60px;-webkit-text-stroke:0.12px #111;">销售一部</div>
<div class="t" style="top:300.98px;font-size:8.5px;color:#666;line-height:12px;right:425.70px;"><span class="r">*</span>总数量</div>
<div class="b" style="left:863.20px;top:298.20px;width:154.30px;height:15.10px;background:#f5f7fc;border-radius:2px"></div>
<div class="t" style="top:300.00px;font-size:8.6px;color:#111;line-height:12px;left:864.80px;-webkit-text-stroke:0.12px #111;">203.00</div>
<div class="t" style="top:328.58px;font-size:8.5px;color:#666;line-height:12px;right:904.70px;"><span class="r">*</span>总金额</div>
<div class="b" style="left:383.80px;top:325.80px;width:178.80px;height:15.10px;background:#f5f7fc;border-radius:2px"></div>
<div class="t" style="top:327.60px;font-size:8.6px;color:#111;line-height:12px;left:385.40px;-webkit-text-stroke:0.12px #111;">20,000.00</div>
<div class="t" style="top:328.58px;font-size:8.5px;color:#666;line-height:12px;right:654.50px;"><span class="r">*</span>制单人</div>
<div class="b" style="left:633.00px;top:325.80px;width:155.30px;height:15.10px;background:#f5f7fc;border-radius:2px"></div>
<div class="t" style="top:327.60px;font-size:8.6px;color:#111;line-height:12px;left:634.60px;-webkit-text-stroke:0.12px #111;">812 - 许三多</div>
<div class="t" style="top:328.58px;font-size:8.5px;color:#666;line-height:12px;right:425.70px;"><span class="r">*</span>制单日期</div>
<div class="b" style="left:863.20px;top:325.80px;width:154.30px;height:15.10px;background:#f5f7fc;border-radius:2px"></div>
<div class="t" style="top:327.60px;font-size:8.6px;color:#666;line-height:12px;left:864.80px;">2024-01-24</div>
<div class="t" style="top:361.28px;font-size:8.5px;color:#666;line-height:12px;right:904.70px;">备注</div>
<div class="t" style="top:366.40px;font-size:8.6px;color:#aaa;line-height:12px;right:271.70px;">0/250</div>
<svg class="b" style="left:1007.40px;top:364.00px;" width="11" height="13.2" viewBox="0 0 11 13.2"><path d="M0.6 12.2 L9.9 0.6 M4.2 12.2 L9.9 5.2 M7.9 12.2 L9.9 9.8" stroke="#555" stroke-width="1" fill="none"/></svg>
<div class="t" style="top:398.38px;font-size:8.5px;color:#666;line-height:12px;right:904.70px;">附件</div>
<div class="btn" style="left:383.80px;top:393.20px;width:49.80px;height:21.40px;border-color:#cfd9ea;"></div>
<svg class="b" style="left:391.80px;top:398.90px;" width="10" height="10" viewBox="0 0 10 10"><path d="M5 0.6 L8 3.9 H6 V6.6 H4 V3.9 H2 Z" fill="#333"/><rect x="0.3" y="8" width="9.4" height="1.5" fill="#333"/></svg>
<div class="t" style="top:398.58px;font-size:8.5px;color:#555;line-height:12px;left:408.70px;">上传</div>
<div class="b" style="left:329.20px;top:428.00px;width:693.40px;height:29.40px;background:#ededed"></div>
<div class="b" style="left:335.20px;top:434.00px;width:2.80px;height:17.00px;background:#2f7fd6"></div>
<div class="t" style="top:437.28px;font-size:8.5px;color:#222;line-height:12px;left:343.20px;font-weight:bold;">报价明细</div>
<svg class="b" style="left:1001.20px;top:440.00px;" width="8.8" height="5.6" viewBox="0 0 8.8 5.6"><path d="M0.7 4.8 L4.4 1 L8.1 4.8" stroke="#3b86d8" stroke-width="1.2" fill="none"/></svg>
<div class="t" style="top:465.39px;font-size:8.6px;color:#3b86d8;line-height:12px;left:337.00px;">报价明细</div>
<div class="b" style="left:330.00px;top:482.80px;width:692.00px;height:0.70px;background:#f6f6f6"></div>
<div class="b" style="left:936.70px;top:463.20px;width:35.30px;height:16.40px;border:1px solid #a9c2fa;border-radius:2.5px;background:#fff"></div>
<div class="t" style="top:466.07px;font-size:8.4px;color:#4b7df0;line-height:12px;left:854.40px;width:200px;text-align:center;">增加</div>
<div class="b" style="left:978.70px;top:463.20px;width:35.90px;height:16.40px;border:1px solid #f9a595;border-radius:2.5px;background:#fff"></div>
<div class="t" style="top:466.07px;font-size:8.4px;color:#f0502e;line-height:12px;left:896.60px;width:200px;text-align:center;">删除</div>
<div class="b" style="left:337.00px;top:490.50px;width:679.80px;height:23.70px;background:#f5f7fb"></div>
<div class="b" style="left:337.00px;top:490.15px;width:679.80px;height:0.70px;background:#eff1f6"></div>
<div class="b" style="left:337.00px;top:513.85px;width:679.80px;height:0.70px;background:#eff1f6"></div>
<div class="b" style="left:337.00px;top:540.85px;width:679.80px;height:0.70px;background:#eff1f6"></div>
<div class="b" style="left:336.65px;top:490.50px;width:0.70px;height:76.50px;background:#eff1f6"></div>
<div class="b" style="left:362.90px;top:490.50px;width:0.70px;height:76.50px;background:#eff1f6"></div>
<div class="b" style="left:501.65px;top:490.50px;width:0.70px;height:76.50px;background:#eff1f6"></div>
<div class="b" style="left:567.05px;top:490.50px;width:0.70px;height:76.50px;background:#eff1f6"></div>
<div class="b" style="left:607.65px;top:490.50px;width:0.70px;height:76.50px;background:#eff1f6"></div>
<div class="b" style="left:662.15px;top:490.50px;width:0.70px;height:76.50px;background:#eff1f6"></div>
<div class="b" style="left:716.65px;top:490.50px;width:0.70px;height:76.50px;background:#eff1f6"></div>
<div class="b" style="left:764.15px;top:490.50px;width:0.70px;height:76.50px;background:#eff1f6"></div>
<div class="b" style="left:836.65px;top:490.50px;width:0.70px;height:76.50px;background:#eff1f6"></div>
<div class="b" style="left:877.15px;top:490.50px;width:0.70px;height:76.50px;background:#eff1f6"></div>
<div class="b" style="left:946.65px;top:490.50px;width:0.70px;height:76.50px;background:#eff1f6"></div>
<div class="b" style="left:1016.45px;top:490.50px;width:0.70px;height:76.50px;background:#eff1f6"></div>
<div class="ck" style="left:342.7px;top:496.1px;width:12.5px;height:12.3px"></div>
<div class="t" style="top:497.08px;font-size:8.5px;color:#666;line-height:12px;left:332.62px;width:200px;text-align:center;"><span class="r">*</span>产品</div>
<div class="t" style="top:497.08px;font-size:8.5px;color:#666;line-height:12px;left:434.70px;width:200px;text-align:center;">型号</div>
<div class="t" style="top:497.08px;font-size:8.5px;color:#666;line-height:12px;left:487.70px;width:200px;text-align:center;">单位</div>
<div class="t" style="top:497.08px;font-size:8.5px;color:#666;line-height:12px;left:535.25px;width:200px;text-align:center;">标准价</div>
<div class="t" style="top:497.08px;font-size:8.5px;color:#666;line-height:12px;left:589.75px;width:200px;text-align:center;"><span class="r">*</span>实售价</div>
<div class="t" style="top:497.08px;font-size:8.5px;color:#666;line-height:12px;left:640.75px;width:200px;text-align:center;">税率(%)</div>
<div class="t" style="top:497.08px;font-size:8.5px;color:#666;line-height:12px;left:700.75px;width:200px;text-align:center;">不含税单价</div>
<div class="t" style="top:497.08px;font-size:8.5px;color:#666;line-height:12px;left:757.25px;width:200px;text-align:center;"><span class="r">*</span>数量</div>
<div class="t" style="top:497.08px;font-size:8.5px;color:#666;line-height:12px;left:812.25px;width:200px;text-align:center;">金额</div>
<div class="t" style="top:497.08px;font-size:8.5px;color:#666;line-height:12px;left:881.90px;width:200px;text-align:center;">税额</div>
<div class="ck" style="left:342.7px;top:521.70px;width:12.5px;height:12.3px"></div>
<div class="t" style="top:521.90px;font-size:8.6px;color:#111;line-height:12px;left:370.70px;-webkit-text-stroke:0.12px #111;">华硕主板</div>
<svg class="b" style="left:482.00px;top:522.80px;" width="10.4" height="10.4" viewBox="0 0 10.4 10.4"><circle cx="4.1" cy="4.1" r="3.2" stroke="#3b86d8" stroke-width="1" fill="none"/><path d="M6.4 6.4 L9.7 9.7" stroke="#3b86d8" stroke-width="1.5" stroke-linecap="round"/></svg>
<div class="b" style="left:507.50px;top:520.10px;width:54.30px;height:15.00px;background:#f5f7fc;border-radius:2px"></div>
<div class="b" style="left:573.00px;top:520.10px;width:29.00px;height:15.00px;background:#f5f7fc;border-radius:2px"></div>
<div class="t" style="top:521.90px;font-size:9.4px;color:#111;line-height:12px;left:574.40px;-webkit-text-stroke:0.12px #111;">个</div>
<div class="b" style="left:613.70px;top:520.10px;width:43.30px;height:15.00px;background:#f5f7fc;border-radius:2px"></div>
<div class="t" style="top:521.60px;font-size:8.6px;color:#111;line-height:12px;left:615.60px;-webkit-text-stroke:0.12px #111;">0</div>
<div class="t" style="top:521.60px;font-size:8.6px;color:#111;line-height:12px;left:670.00px;-webkit-text-stroke:0.12px #111;">100.00</div>
<div class="t" style="top:521.60px;font-size:8.6px;color:#111;line-height:12px;left:725.00px;-webkit-text-stroke:0.12px #111;">13.00</div>
<div class="b" style="left:770.50px;top:520.10px;width:60.80px;height:15.00px;background:#f5f7fc;border-radius:2px"></div>
<div class="t" style="top:521.60px;font-size:8.6px;color:#111;line-height:12px;left:772.40px;-webkit-text-stroke:0.12px #111;">88.50</div>
<div class="t" style="top:521.60px;font-size:8.6px;color:#111;line-height:12px;left:844.20px;-webkit-text-stroke:0.12px #111;">200.00</div>
<div class="b" style="left:883.70px;top:520.10px;width:56.80px;height:15.00px;background:#f5f7fc;border-radius:2px"></div>
<div class="t" style="top:521.60px;font-size:8.6px;color:#111;line-height:12px;left:885.60px;-webkit-text-stroke:0.12px #111;">17,699.12</div>
<div class="b" style="left:952.50px;top:520.10px;width:57.00px;height:15.00px;background:#f5f7fc;border-radius:2px"></div>
<div class="t" style="top:521.60px;font-size:8.6px;color:#111;line-height:12px;left:954.40px;-webkit-text-stroke:0.12px #111;">2,300.88</div>
<div class="ck" style="left:342.7px;top:550.10px;width:12.5px;height:12.3px"></div>
<div class="t" style="top:550.30px;font-size:8.6px;color:#111;line-height:12px;left:370.70px;-webkit-text-stroke:0.12px #111;">手动截止阀</div>
<svg class="b" style="left:482.00px;top:551.20px;" width="10.4" height="10.4" viewBox="0 0 10.4 10.4"><circle cx="4.1" cy="4.1" r="3.2" stroke="#3b86d8" stroke-width="1" fill="none"/><path d="M6.4 6.4 L9.7 9.7" stroke="#3b86d8" stroke-width="1.5" stroke-linecap="round"/></svg>
<div class="b" style="left:507.50px;top:548.50px;width:54.30px;height:15.00px;background:#f5f7fc;border-radius:2px"></div>
<div class="t" style="top:550.00px;font-size:8.6px;color:#111;line-height:12px;left:509.40px;-webkit-text-stroke:0.12px #111;">8</div>
<div class="b" style="left:573.00px;top:548.50px;width:29.00px;height:15.00px;background:#f5f7fc;border-radius:2px"></div>
<div class="t" style="top:550.30px;font-size:9.4px;color:#111;line-height:12px;left:574.40px;-webkit-text-stroke:0.12px #111;">个</div>
<div class="b" style="left:613.70px;top:548.50px;width:43.30px;height:15.00px;background:#f5f7fc;border-radius:2px"></div>
<div class="t" style="top:550.00px;font-size:8.6px;color:#111;line-height:12px;left:615.60px;-webkit-text-stroke:0.12px #111;">0</div>
<div class="t" style="top:550.00px;font-size:8.6px;color:#111;line-height:12px;left:670.00px;-webkit-text-stroke:0.12px #111;">0.00</div>
<div class="t" style="top:550.00px;font-size:8.6px;color:#111;line-height:12px;left:725.00px;-webkit-text-stroke:0.12px #111;">0.00</div>
<div class="b" style="left:770.50px;top:548.50px;width:60.80px;height:15.00px;background:#f5f7fc;border-radius:2px"></div>
<div class="t" style="top:550.00px;font-size:8.6px;color:#111;line-height:12px;left:772.40px;-webkit-text-stroke:0.12px #111;">0</div>
<div class="t" style="top:550.00px;font-size:8.6px;color:#111;line-height:12px;left:844.20px;-webkit-text-stroke:0.12px #111;">1.00</div>
<div class="b" style="left:883.70px;top:548.50px;width:56.80px;height:15.00px;background:#f5f7fc;border-radius:2px"></div>
<div class="t" style="top:550.00px;font-size:8.6px;color:#111;line-height:12px;left:885.60px;-webkit-text-stroke:0.12px #111;">0</div>
<div class="b" style="left:952.50px;top:548.50px;width:57.00px;height:15.00px;background:#f5f7fc;border-radius:2px"></div>
<div class="t" style="top:550.00px;font-size:8.6px;color:#111;line-height:12px;left:954.40px;-webkit-text-stroke:0.12px #111;">0</div>
<div class="b" style="left:310.7px;top:135px;width:730.0999999999999px;height:432px;overflow:hidden;pointer-events:none">
<div class="wm" style="right:486.8px;top:44.6px;color:rgba(0,0,0,0.078)">杭州八骏科技有限公司云one 袁朗 八骏科技 2024-03-12</div>
<div class="wm" style="right:344.5px;top:44.6px;color:rgba(0,0,0,0.078)">杭州八骏科技有限公司云one 袁朗 八骏科技 2024-03-12</div>
<div class="wm" style="right:202.2px;top:44.6px;color:rgba(0,0,0,0.078)">杭州八骏科技有限公司云one 袁朗 八骏科技 2024-03-12</div>
<div class="wm" style="right:59.9px;top:44.6px;color:rgba(0,0,0,0.078)">杭州八骏科技有限公司云one 袁朗 八骏科技 2024-03-12</div>
<div class="wm" style="right:-82.4px;top:44.6px;color:rgba(0,0,0,0.078)">杭州八骏科技有限公司云one 袁朗 八骏科技 2024-03-12</div>
<div class="wm" style="right:486.8px;top:186.9px;color:rgba(0,0,0,0.078)">杭州八骏科技有限公司云one 袁朗 八骏科技 2024-03-12</div>
<div class="wm" style="right:344.5px;top:186.9px;color:rgba(0,0,0,0.078)">杭州八骏科技有限公司云one 袁朗 八骏科技 2024-03-12</div>
<div class="wm" style="right:202.2px;top:186.9px;color:rgba(0,0,0,0.078)">杭州八骏科技有限公司云one 袁朗 八骏科技 2024-03-12</div>
<div class="wm" style="right:59.9px;top:186.9px;color:rgba(0,0,0,0.078)">杭州八骏科技有限公司云one 袁朗 八骏科技 2024-03-12</div>
<div class="wm" style="right:-82.4px;top:186.9px;color:rgba(0,0,0,0.078)">杭州八骏科技有限公司云one 袁朗 八骏科技 2024-03-12</div>
<div class="wm" style="right:486.8px;top:329.2px;color:rgba(0,0,0,0.078)">杭州八骏科技有限公司云one 袁朗 八骏科技 2024-03-12</div>
<div class="wm" style="right:344.5px;top:329.2px;color:rgba(0,0,0,0.078)">杭州八骏科技有限公司云one 袁朗 八骏科技 2024-03-12</div>
<div class="wm" style="right:202.2px;top:329.2px;color:rgba(0,0,0,0.078)">杭州八骏科技有限公司云one 袁朗 八骏科技 2024-03-12</div>
<div class="wm" style="right:59.9px;top:329.2px;color:rgba(0,0,0,0.078)">杭州八骏科技有限公司云one 袁朗 八骏科技 2024-03-12</div>
<div class="wm" style="right:-82.4px;top:329.2px;color:rgba(0,0,0,0.078)">杭州八骏科技有限公司云one 袁朗 八骏科技 2024-03-12</div>
<div class="wm" style="right:486.8px;top:471.5px;color:rgba(0,0,0,0.078)">杭州八骏科技有限公司云one 袁朗 八骏科技 2024-03-12</div>
<div class="wm" style="right:344.5px;top:471.5px;color:rgba(0,0,0,0.078)">杭州八骏科技有限公司云one 袁朗 八骏科技 2024-03-12</div>
<div class="wm" style="right:202.2px;top:471.5px;color:rgba(0,0,0,0.078)">杭州八骏科技有限公司云one 袁朗 八骏科技 2024-03-12</div>
<div class="wm" style="right:59.9px;top:471.5px;color:rgba(0,0,0,0.078)">杭州八骏科技有限公司云one 袁朗 八骏科技 2024-03-12</div>
<div class="wm" style="right:-82.4px;top:471.5px;color:rgba(0,0,0,0.078)">杭州八骏科技有限公司云one 袁朗 八骏科技 2024-03-12</div>
</div>
</div>
</body></html>
